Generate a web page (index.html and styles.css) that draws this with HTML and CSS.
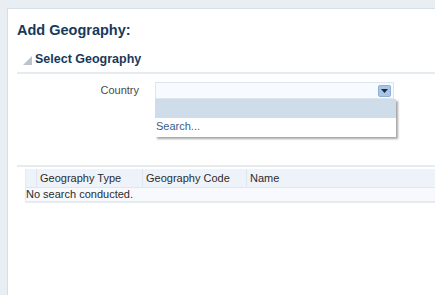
FILE: index.html
```html
<!DOCTYPE html>
<html lang="en">
<head>
    <meta charset="UTF-8">
    <title>Add Geography</title>
    <link rel="stylesheet" href="styles.css">
</head>
<body>
    <div class="panel">
        <h1 class="title">Add Geography:</h1>
        <h2 class="section">
            <span class="disclosure"></span>
            Select Geography
        </h2>

        <div class="form">
            <div class="form-row">
                <label class="label">Country</label>
                <div class="combo">
                    <div class="combo-field">
                        <span class="combo-btn">
                            <svg width="7" height="4" viewBox="0 0 7 4"><path d="M0 0h7L3.5 4z" fill="#1c2a3a"/></svg>
                        </span>
                    </div>
                    <div class="combo-list">
                        <div class="combo-item selected"></div>
                        <div class="combo-item">Search...</div>
                    </div>
                </div>
            </div>
        </div>

        <div class="results">
            <table class="grid">
                <thead>
                    <tr>
                        <th class="col-sel"></th>
                        <th class="col-type">Geography Type</th>
                        <th class="col-code">Geography Code</th>
                        <th>Name</th>
                    </tr>
                </thead>
                <tbody>
                    <tr>
                        <td colspan="4">No search conducted.</td>
                    </tr>
                </tbody>
            </table>
        </div>
    </div>
</body>
</html>
```

FILE: styles.css
```css
* {
    margin: 0;
    padding: 0;
    box-sizing: border-box;
}

body {
    font-family: 'Liberation Sans', Arial, sans-serif;
    font-size: 11px;
    background: #e9eef3;
    padding: 8px 0 0 7px;
    height: 295px;
    overflow: hidden;
}

.panel {
    background: white;
    border-left: 1px solid #d6dfe8;
    border-top: 1px solid #d6dfe8;
    height: 100%;
    padding: 12px 0 0 9px;
}

.title {
    font-size: 14.5px;
    font-weight: bold;
    color: #17395c;
    line-height: 18px;
}

.section {
    display: flex;
    align-items: center;
    gap: 3px;
    font-size: 12.5px;
    font-weight: bold;
    color: #17395c;
    line-height: 16px;
    margin: 12px 0 0 6px;
}

.disclosure {
    width: 0;
    height: 0;
    border-left: 9px solid transparent;
    border-bottom: 9px solid #b9c4cf;
    margin-top: 2px;
}

.form {
    border-top: 2px solid #e6ebf0;
    margin-top: 5px;
    padding: 8px 0 0;
    height: 93px;
}

.form-row {
    display: flex;
    align-items: flex-start;
}

.label {
    width: 122px;
    text-align: right;
    color: #4a4a4a;
    line-height: 15px;
    margin-top: 1px;
}

.combo {
    margin-left: 16px;
    width: 241px;
}

.combo-field {
    height: 17px;
    width: 239px;
    border: 1px solid #dde5ed;
    background: #f7fbff;
    display: flex;
    justify-content: flex-end;
    align-items: center;
    padding-right: 2px;
}

.combo-btn {
    width: 13px;
    height: 12px;
    background: #a9c6e6;
    border: 1px solid #8fb0d4;
    border-radius: 2px;
    display: flex;
    align-items: center;
    justify-content: center;
}

.combo-list {
    background: white;
    box-shadow: 2px 2px 2px rgba(0, 0, 0, 0.35);
    width: 241px;
    padding-bottom: 2px;
}

.combo-item {
    height: 17px;
    line-height: 17px;
    color: #3c5d8a;
    padding-left: 1px;
}

.combo-item.selected {
    background: #cfdcea;
    height: 19px;
}

.results {
    border-top: 2px solid #e6ebf0;
    padding: 2px 0 0 8px;
}

.grid {
    width: 100%;
    border-collapse: collapse;
    border-left: 1px solid #e6ebf0;
    border-bottom: 2px solid #e6ebf0;
}

.grid th {
    background: #eef3fa;
    font-weight: normal;
    text-align: left;
    color: #2c2c2c;
    height: 18px;
    padding: 1px 3px 0;
    border-right: 1px solid #dfe6ee;
    border-bottom: 1px solid #dfe6ee;
}

.grid th:last-child {
    border-right: none;
}

.grid .col-sel {
    width: 11px;
}

.grid .col-type {
    width: 106px;
}

.grid .col-code {
    width: 104px;
}

.grid td {
    background: #f7f9fc;
    color: #2c2c2c;
    height: 14px;
    line-height: 13px;
    padding: 0;
}
```
